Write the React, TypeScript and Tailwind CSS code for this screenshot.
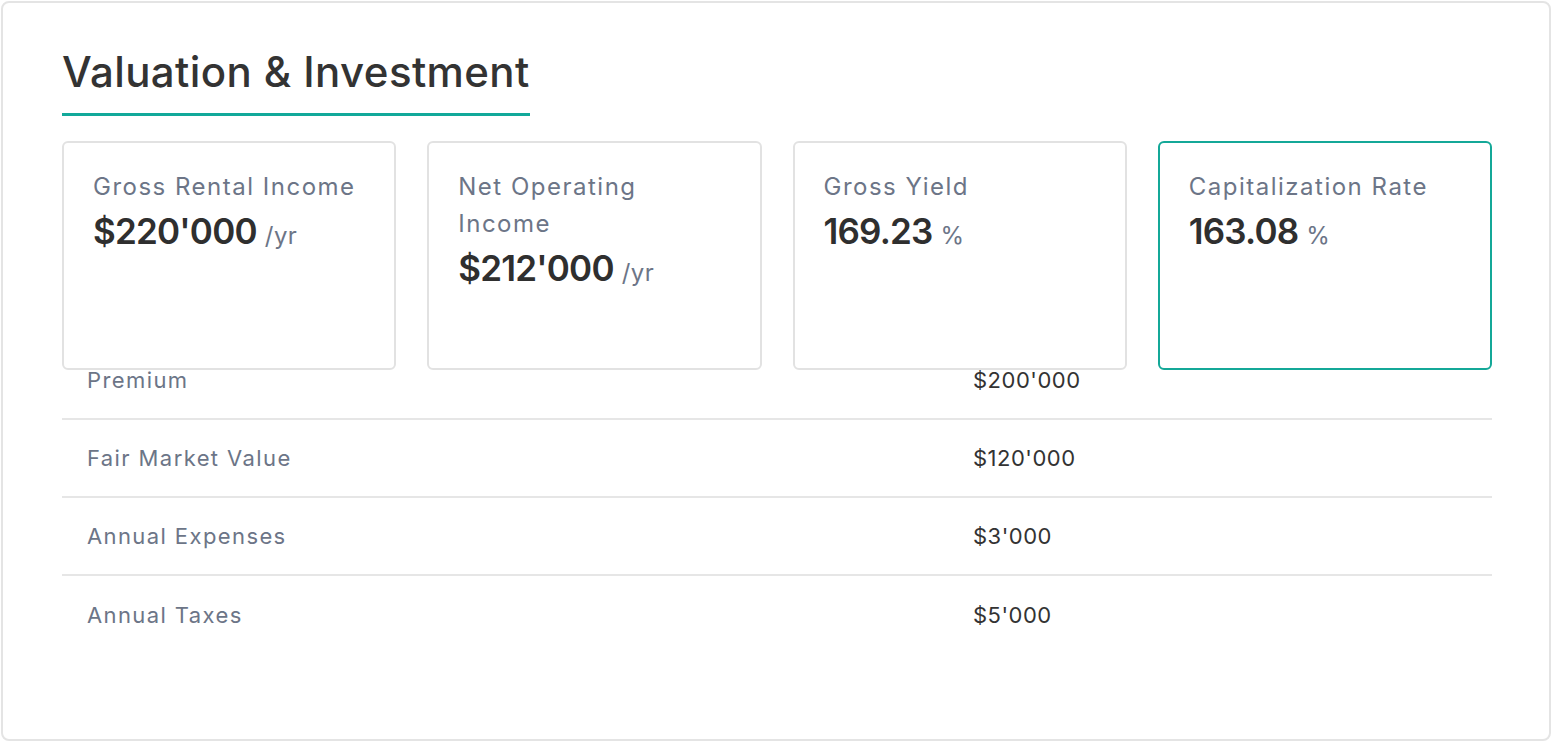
import React from 'react';

const stats = [
  { label: 'Gross Rental Income', value: "$220'000", unit: '/yr' },
  { label: 'Net Operating Income', value: "$212'000", unit: '/yr' },
  { label: 'Gross Yield', value: '169.23', unit: '%' },
  { label: 'Capitalization Rate', value: '163.08', unit: '%', active: true },
];

const rows = [
  { label: 'Premium', value: "$200'000" },
  { label: 'Fair Market Value', value: "$120'000" },
  { label: 'Annual Expenses', value: "$3'000" },
  { label: 'Annual Taxes', value: "$5'000" },
];

const StatCard = ({ label, value, unit, active }: { label: string; value: string; unit: string; active?: boolean }) => (
  <div
    className={
      'relative z-10 h-[229px] rounded-md bg-white pl-[29px] pr-4 pt-[25px] ' +
      (active ? 'border-2 border-[#14a898]' : 'border-2 border-[#e2e2e2]')
    }
  >
    <div className="max-w-[272px] text-[24px] leading-[37px] tracking-[1.5px] text-[#6c7587]">{label}</div>
    <div className="mt-[5px] flex items-baseline gap-2 leading-[42px]">
      <span className="text-[35px] font-semibold tracking-[-0.8px] text-[#2f2f2f]">{value}</span>
      <span className="text-[24px] tracking-[0.5px] text-[#6c7587]">{unit}</span>
    </div>
  </div>
);

export default function App() {
  return (
    <div className="p-px font-['Inter',sans-serif]">
      <div className="h-[740px] rounded-lg border-2 border-[#e4e4e4] bg-white pl-[59px] pr-[57px] pt-[42px]">
        <h2 className="inline-block border-b-[3px] border-[#12a99a] pb-[14px] text-[42px] font-medium leading-[54px] tracking-[0.4px] text-[#333333]">
          Valuation &amp; Investment
        </h2>

        <div className="mt-[25px] grid h-[199px] grid-cols-4 gap-[31px]">
          {stats.map((s) => (
            <StatCard key={s.label} {...s} />
          ))}
        </div>

        <div className="mt-[2px] divide-y-2 divide-[#e6e6e6]">
          {rows.map((r) => (
            <div key={r.label} className="grid h-[78px] grid-cols-[911px_1fr] items-center">
              <div className="pl-[25px] text-[22px] tracking-[1.4px] text-[#6c7587]">{r.label}</div>
              <div className="text-[22px] tracking-[0.5px] text-[#333333]">{r.value}</div>
            </div>
          ))}
        </div>
      </div>
    </div>
  );
}
